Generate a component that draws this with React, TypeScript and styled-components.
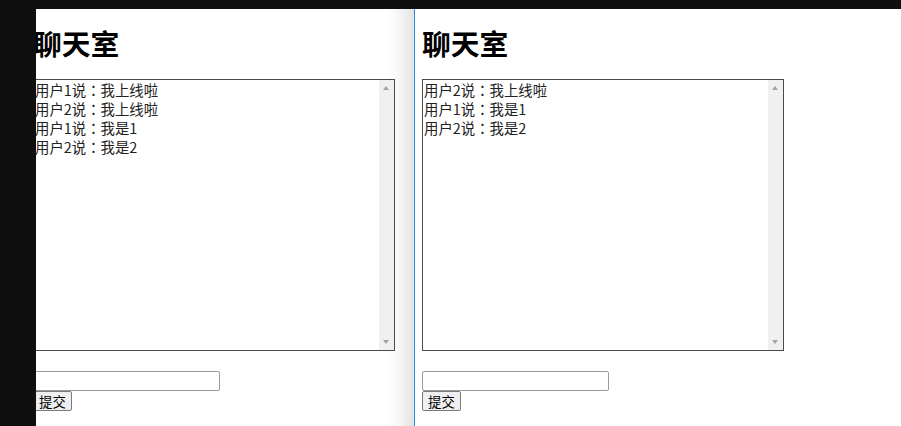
import { createGlobalStyle, styled } from 'styled-components'

const GlobalStyle = createGlobalStyle`
    html, body {
        margin: 0;
        padding: 0;
        background: #0f0f0f;
    }
    * {
        box-sizing: border-box;
    }
`

const cjk = `"Noto Sans CJK SC", "Noto Sans", sans-serif`
// JP face centres the full-width colon like the reference does
const cjkText = `"Noto Sans CJK JP", "Noto Sans CJK SC", sans-serif`

type Room = {
    messages: string[]
    clipped?: boolean
}

const rooms: Room[] = [
    {
        clipped: true,
        messages: ['用户1说：我上线啦', '用户2说：我上线啦', '用户1说：我是1', '用户2说：我是2'],
    },
    {
        messages: ['用户2说：我上线啦', '用户1说：我是1', '用户2说：我是2'],
    },
]

const ChatWindow = ({ room }: { room: Room }) => (
    <Window $clipped={room.clipped}>
        <Content $clipped={room.clipped}>
            <Title>聊天室</Title>
            <ChatBox>
                <Messages>
                    {room.messages.map((m, i) => (
                        <Line key={i}>{m}</Line>
                    ))}
                </Messages>
                <ScrollTrack>
                    <ArrowUp />
                    <ArrowDown />
                </ScrollTrack>
            </ChatBox>
            <Form onSubmit={(e) => e.preventDefault()}>
                <Input type="text" />
                <Button type="submit">提交</Button>
            </Form>
        </Content>
    </Window>
)

const App = () => {
    return (
        <>
            <GlobalStyle />
            <Screen>
                <TopBar />
                <Desktop>
                    <SideBar />
                    <ChatWindow room={rooms[0]} />
                    <Divider />
                    <ChatWindow room={rooms[1]} />
                </Desktop>
            </Screen>
        </>
    )
}

export default App

const Screen = styled.div`
    display: flex;
    flex-direction: column;
    width: 901px;
    height: 426px;
    overflow: hidden;
`

const TopBar = styled.div`
    height: 9px;
    flex-shrink: 0;
    background: #0f0f0f;
`

const Desktop = styled.div`
    display: flex;
    flex: 1;
    min-height: 0;
`

const SideBar = styled.div`
    width: 36px;
    flex-shrink: 0;
    background: #0f0f0f;
`

const Window = styled.div<{ $clipped?: boolean }>`
    flex: ${({ $clipped }) => ($clipped ? '0 0 378px' : '1')};
    overflow: hidden;
    background: #ffffff;
    box-shadow: ${({ $clipped }) =>
        $clipped ? 'inset -22px 0 20px -14px rgba(0, 0, 0, 0.14)' : 'none'};
`

const Content = styled.div<{ $clipped?: boolean }>`
    display: flex;
    flex-direction: column;
    align-items: flex-start;
    padding: 16px 0 0 ${({ $clipped }) => ($clipped ? '0' : '7px')};
    margin-left: ${({ $clipped }) => ($clipped ? '-3px' : '0')};
`

const Divider = styled.div`
    width: 1px;
    flex-shrink: 0;
    background: #2b8be3;
`

const Title = styled.h1`
    margin: 0;
    font-family: ${cjk};
    font-size: 28.8px;
    font-weight: 700;
    line-height: 36px;
    color: #000000;
`

const ChatBox = styled.div`
    display: flex;
    width: 362px;
    height: 272px;
    margin-top: 18px;
    border: 1px solid #4a4a4a;
    background: #ffffff;
`

const Messages = styled.div`
    flex: 1;
    padding: 0 0 0 1px;
    font-family: ${cjkText};
    font-size: 14.4px;
    line-height: 19px;
    color: #222222;
`

const Line = styled.div`
    white-space: nowrap;
`

const ScrollTrack = styled.div`
    position: relative;
    width: 15px;
    flex-shrink: 0;
    background: #f0f0f0;
`

const ArrowUp = styled.span`
    position: absolute;
    top: 6px;
    left: 4px;
    width: 0;
    height: 0;
    border-left: 3.5px solid transparent;
    border-right: 3.5px solid transparent;
    border-bottom: 4px solid #a3a3a3;
`

const ArrowDown = styled.span`
    position: absolute;
    bottom: 6px;
    left: 4px;
    width: 0;
    height: 0;
    border-left: 3.5px solid transparent;
    border-right: 3.5px solid transparent;
    border-top: 4px solid #a3a3a3;
`

const Form = styled.form`
    display: flex;
    flex-direction: column;
    align-items: flex-start;
    margin-top: 20px;
`

const Input = styled.input`
    width: 187px;
    height: 20px;
    margin: 0;
    padding: 1px 2px;
    border: 1px solid #9a9a9a;
    border-radius: 2px;
    background: #ffffff;
    outline: none;
`

const Button = styled.button`
    width: 39px;
    height: 20px;
    margin: 0;
    padding: 0;
    border: 1px solid #7a7a7a;
    border-radius: 2px;
    background: #efefef;
    font-family: ${cjk};
    font-size: 13.4px;
    line-height: 16px;
    color: #000000;
`
